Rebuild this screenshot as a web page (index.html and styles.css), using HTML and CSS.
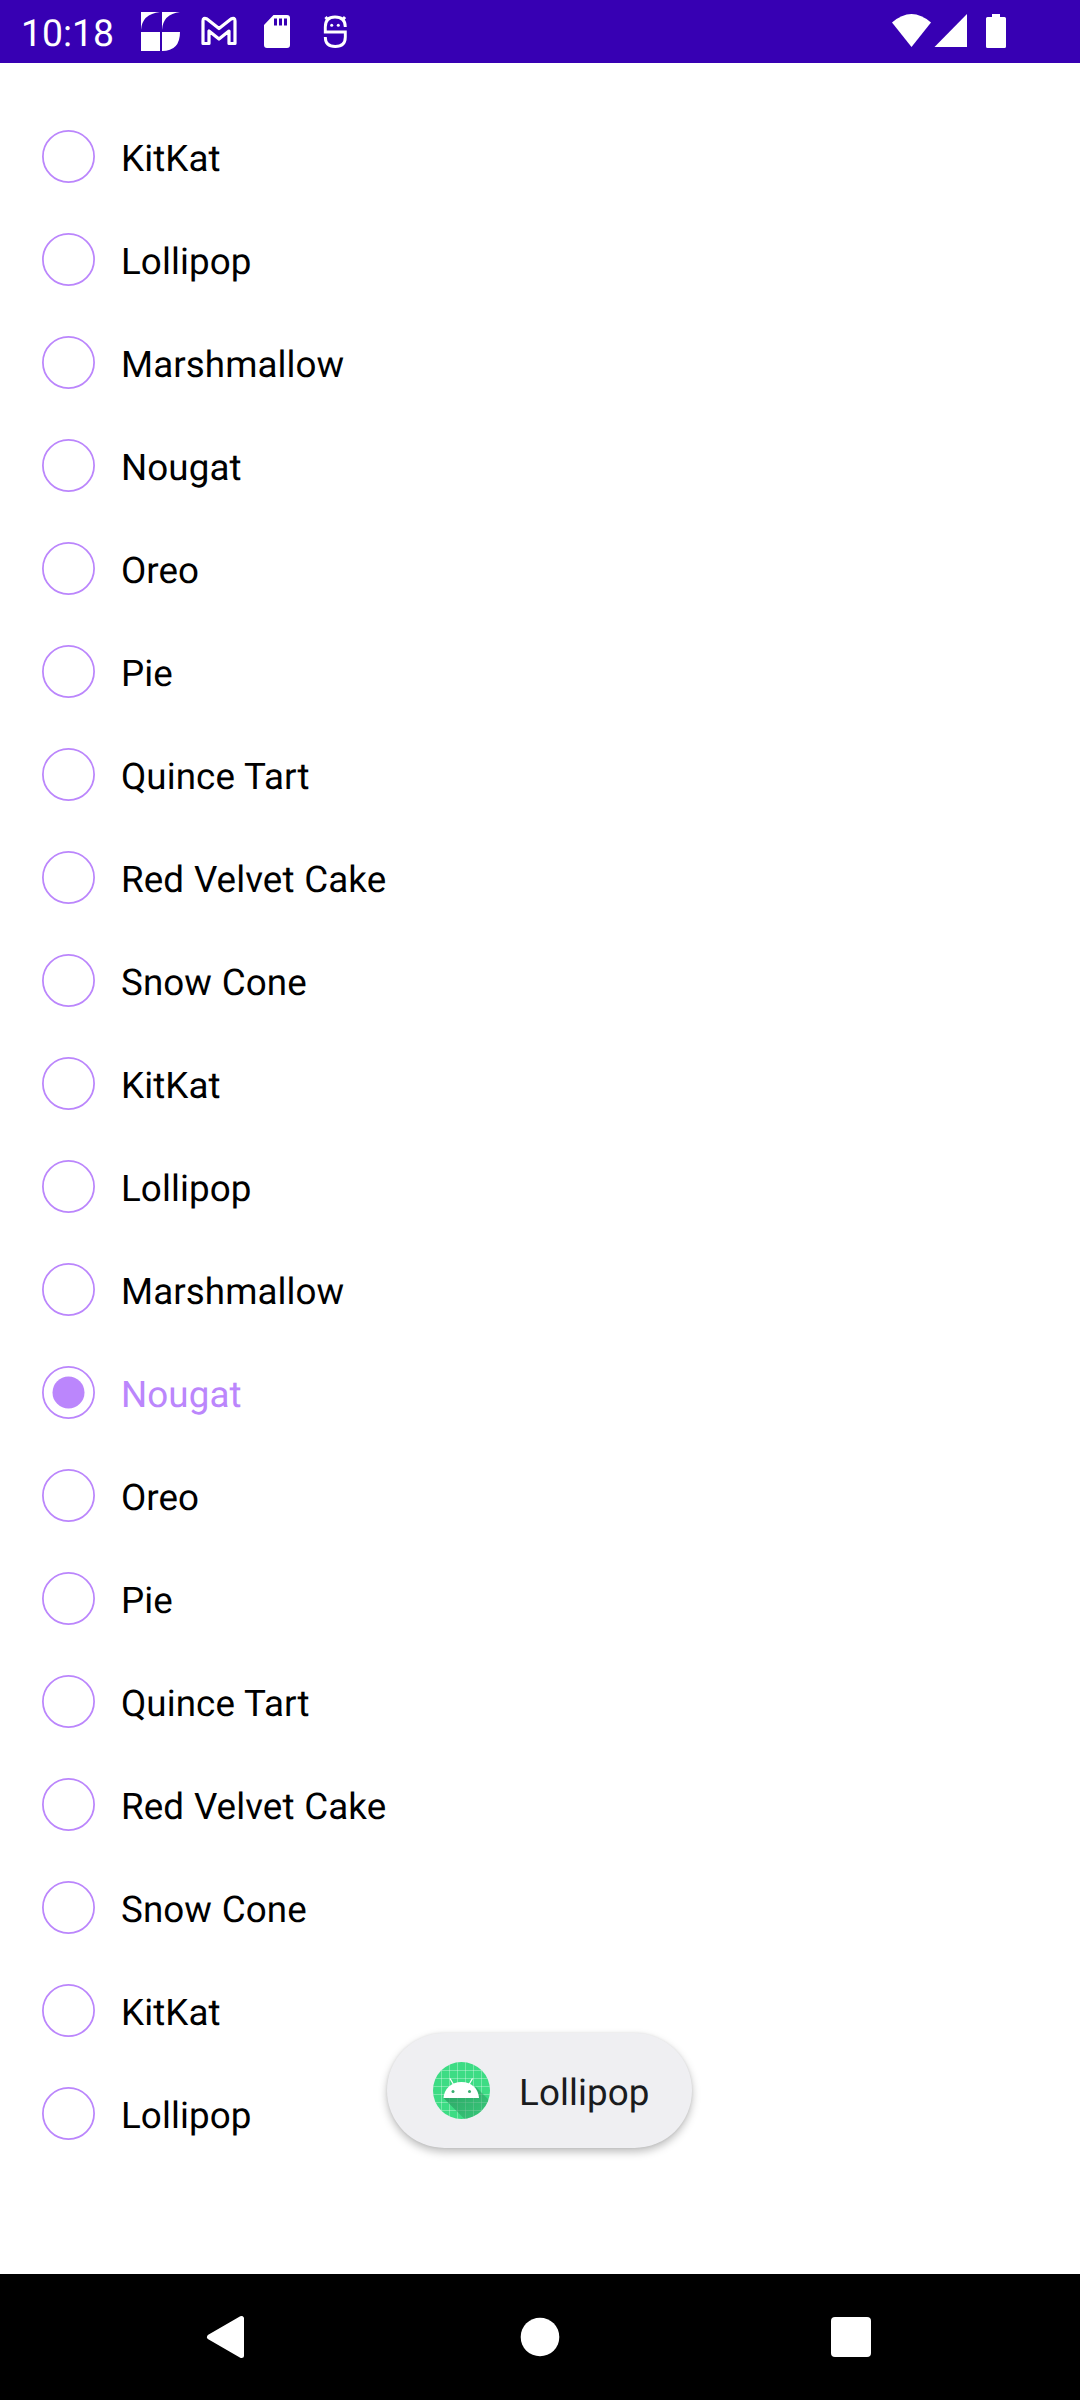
FILE: index.html
```html
<!DOCTYPE html>
<html lang="en">
<head>
<meta charset="utf-8">
<title>Single choice list</title>
<link rel="stylesheet" href="styles.css">
</head>
<body>
<div class="screen">
  <header class="status-bar">
    <span class="clock">10:18</span>
    <svg class="status-icons" width="220" height="63" viewBox="136 0 220 63" fill="#fff">
      <path d="M141 12h19Q142 14 141 30zM162 12h18Q163 14 162 30zM141 32h19v19h-19zM162 32h18Q180 51 162 51z"/>
      <path d="M203 43.500V21q0-4 4-2l12 9.500 12-9.500q4-2 4 2v22.500h-6V31l-10 8-10-8v12.500z" fill="none" stroke="#fff" stroke-width="3.200" stroke-linejoin="round"/>
      <path fill-rule="evenodd" d="M273.500 15H287q3 0 3 3v27q0 3-3 3h-20q-3 0-3-3V25zM274 18.500v7h3v-7zM279 18.500v7h3v-7zM284 18.500v7h3v-7z"/>
      <path d="M345.300 27q0-10-10.300-10-9.700 0-9.700 10v5h20v5q0 9.500-10 9.500t-10-9.500M328 20l-2.500-3M342.500 20l2.500-3" fill="none" stroke="#fff" stroke-width="2.900"/>
      <circle cx="331.700" cy="25.300" r="1.500"/><circle cx="338.300" cy="25.300" r="1.500"/>
    </svg>
    <svg class="system-icons" width="116" height="63" viewBox="891 0 116 63" fill="#fff">
      <path d="M892 22.500Q911.500 5.500 931 22.500L911.500 47z"/>
      <path d="M934.500 47L967 14v33z"/>
      <path d="M992 14h8v3h4.500q1.500 0 1.500 1.500v28q0 1.500-1.500 1.500h-17q-1.500 0-1.500-1.500v-28q0-1.500 1.500-1.500h4.500z"/>
    </svg>
  </header>
  <svg class="symbols" width="0" height="0">
    <symbol id="ring" viewBox="0 0 53 53"><circle cx="26.500" cy="26.500" r="25.600" fill="none" stroke="#bb86fc" stroke-width="1.750"/></symbol>
  </svg>
  <ul class="list">
    <li class="row"><svg class="radio"><use href="#ring"/></svg><span class="label">KitKat</span></li>
    <li class="row"><svg class="radio"><use href="#ring"/></svg><span class="label">Lollipop</span></li>
    <li class="row"><svg class="radio"><use href="#ring"/></svg><span class="label">Marshmallow</span></li>
    <li class="row"><svg class="radio"><use href="#ring"/></svg><span class="label">Nougat</span></li>
    <li class="row"><svg class="radio"><use href="#ring"/></svg><span class="label">Oreo</span></li>
    <li class="row"><svg class="radio"><use href="#ring"/></svg><span class="label">Pie</span></li>
    <li class="row"><svg class="radio"><use href="#ring"/></svg><span class="label">Quince Tart</span></li>
    <li class="row"><svg class="radio"><use href="#ring"/></svg><span class="label">Red Velvet Cake</span></li>
    <li class="row"><svg class="radio"><use href="#ring"/></svg><span class="label">Snow Cone</span></li>
    <li class="row"><svg class="radio"><use href="#ring"/></svg><span class="label">KitKat</span></li>
    <li class="row"><svg class="radio"><use href="#ring"/></svg><span class="label">Lollipop</span></li>
    <li class="row"><svg class="radio"><use href="#ring"/></svg><span class="label">Marshmallow</span></li>
    <li class="row selected"><svg class="radio"><use href="#ring"/><circle cx="26.500" cy="26.500" r="16" fill="#bb86fc"/></svg><span class="label">Nougat</span></li>
    <li class="row"><svg class="radio"><use href="#ring"/></svg><span class="label">Oreo</span></li>
    <li class="row"><svg class="radio"><use href="#ring"/></svg><span class="label">Pie</span></li>
    <li class="row"><svg class="radio"><use href="#ring"/></svg><span class="label">Quince Tart</span></li>
    <li class="row"><svg class="radio"><use href="#ring"/></svg><span class="label">Red Velvet Cake</span></li>
    <li class="row"><svg class="radio"><use href="#ring"/></svg><span class="label">Snow Cone</span></li>
    <li class="row"><svg class="radio"><use href="#ring"/></svg><span class="label">KitKat</span></li>
    <li class="row"><svg class="radio"><use href="#ring"/></svg><span class="label">Lollipop</span></li>
  </ul>
  <div class="toast">
    <svg class="toast-icon" width="57" height="57" viewBox="0 0 57 57">
      <defs>
        <clipPath id="disc"><circle cx="28.500" cy="28.500" r="28.500"/></clipPath>
        <linearGradient id="shade" x1="0" y1="0" x2="1" y2="1"><stop offset="0" stop-color="#2a9a60" stop-opacity=".9"/><stop offset="1" stop-color="#2a9a60" stop-opacity=".1"/></linearGradient>
      </defs>
      <g clip-path="url(#disc)">
        <path fill="#3ddc84" d="M0 0h57v57H0z"/>
        <path d="M8.500 0v57M16.500 0v57M24.500 0v57M32.500 0v57M40.500 0v57M48.500 0v57M0 8.500h57M0 16.500h57M0 24.500h57M0 32.500h57M0 40.500h57M0 48.500h57" stroke="#fff" stroke-opacity=".35" stroke-width=".9"/>
        <path fill="url(#shade)" d="M10.500 36L46 36 42 24l24 24v20H42.500z"/>
        <path fill="#fff" d="M10.500 36C11 27 18 20 28.500 20S45.500 27 46 36z"/>
        <path d="M20.500 22.500l-3.500-6M36 22.500l3.500-6" stroke="#fff" stroke-width="1.300"/>
        <circle cx="20" cy="29.500" r="1.500" fill="#3aaf70"/><circle cx="36.500" cy="29.500" r="1.500" fill="#3aaf70"/>
      </g>
    </svg>
    <span class="toast-text">Lollipop</span>
  </div>
  <nav class="nav-bar">
    <svg width="60" height="60" viewBox="0 0 60 60"><path d="M10.500 30L42.500 11.500v37z" fill="#fff" stroke="#fff" stroke-width="5" stroke-linejoin="round"/></svg>
    <svg width="60" height="60" viewBox="0 0 60 60"><circle cx="30" cy="30" r="19.300" fill="#fff"/></svg>
    <svg width="60" height="60" viewBox="0 0 60 60"><rect x="10" y="10" width="40" height="40" rx="4" fill="#fff"/></svg>
  </nav>
</div>
</body>
</html>
```
FILE: styles.css
```css
body {
  margin: 0;
  background: #fff;
  font-family: Roboto, sans-serif;
  text-rendering: geometricPrecision;
}

.screen {
  position: relative;
  display: flex;
  flex-direction: column;
  width: 1080px;
  height: 2400px;
  overflow: hidden;
}

.status-bar {
  display: flex;
  align-items: center;
  height: 63px;
  padding: 0 73px 0 21px;
  background: #3700b3;
  color: #fff;
}

.clock {
  width: 115px;
  padding-top: 5px;
  font-size: 37.3px;
  line-height: 44px;
}

.system-icons {
  margin-left: auto;
}

.symbols {
  position: absolute;
}

.list {
  flex: 1;
  margin: 0;
  padding: 42px 42px 0;
  list-style: none;
}

.row {
  display: flex;
  align-items: center;
  gap: 26px;
  height: 103px;
  color: #000;
}

.radio {
  width: 53px;
  height: 53px;
}

.label {
  padding-top: 5px;
  font-size: 36.75px;
  line-height: 44px;
  letter-spacing: 0.08px;
  word-spacing: 0.6px;
}

.selected {
  color: #bb86fc;
}

.toast {
  position: absolute;
  left: 387px;
  top: 2033px;
  display: flex;
  align-items: center;
  box-sizing: border-box;
  width: 305px;
  height: 115px;
  padding-left: 46px;
  gap: 29px;
  border-radius: 58px;
  background: #efeff2;
  box-shadow: 0 4px 8px rgba(0, 0, 0, 0.26), 0 0 3px rgba(0, 0, 0, 0.08);
  color: #1a1c1e;
}

.toast-text {
  padding-top: 4px;
  font-size: 36.75px;
  line-height: 44px;
  letter-spacing: 0.1px;
}

.nav-bar {
  display: flex;
  justify-content: center;
  align-items: center;
  gap: 251px;
  height: 126px;
  background: #000;
}
```
